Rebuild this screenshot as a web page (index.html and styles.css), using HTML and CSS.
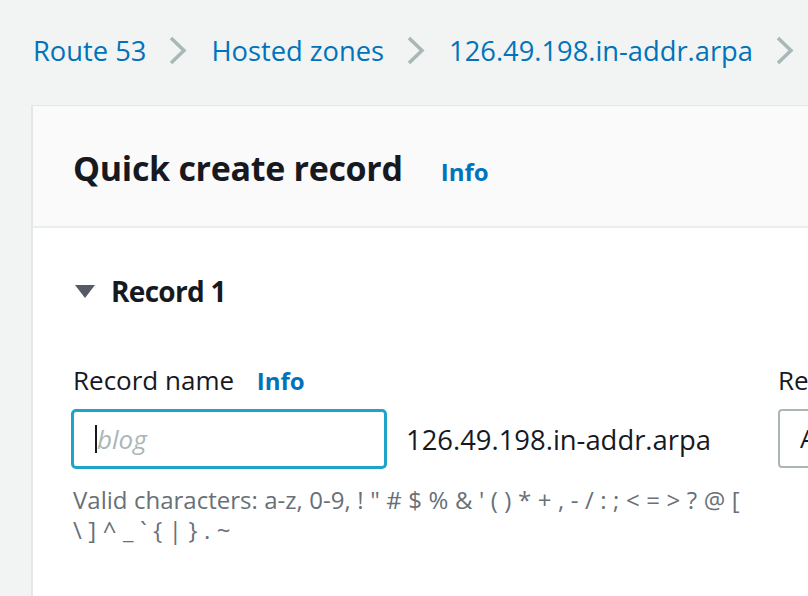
FILE: index.html
```html
<!DOCTYPE html>
<html>
	<head>
		<meta charset="utf-8">
		<meta name="viewport" content="width=device-width" />
		<title>Quick create record</title>
		<link rel="stylesheet" href="styles.css">
	</head>
	<body>
	<nav class="crumbs">
		<a href="#">Route 53</a>
		<svg class="chev" width="19" height="29" viewBox="0 0 19 29"><polyline points="3,2 16,14.5 3,27" /></svg>
		<a href="#">Hosted zones</a>
		<svg class="chev" width="19" height="29" viewBox="0 0 19 29"><polyline points="3,2 16,14.5 3,27" /></svg>
		<a href="#">126.49.198.in-addr.arpa</a>
		<svg class="chev" width="19" height="29" viewBox="0 0 19 29"><polyline points="3,2 16,14.5 3,27" /></svg>
	</nav>
	<main class="card">
		<div class="card-head">
			<h1>Quick create record</h1>
			<a class="info big" href="#">Info</a>
		</div>
		<div class="card-body">
			<div class="section">
				<svg class="caret" width="20" height="14" viewBox="0 0 20 14"><polygon points="0,0 20,0 10,13" /></svg>
				<h2>Record 1</h2>
			</div>
			<div class="fields">
				<div class="field name">
					<div class="label">Record name <a class="info" href="#">Info</a></div>
					<div class="input-row">
						<div class="input"><span class="cursor"></span><span class="ph">blog</span></div>
						<span class="suffix">126.49.198.in-addr.arpa</span>
					</div>
					<p class="help">Valid characters: a-z, 0-9, ! " # $ % &amp; ' ( ) * + , - / : ; &lt; = &gt; ? @ [ \ ] ^ _ ` { | } . ~</p>
				</div>
				<div class="field type">
					<div class="label">Record type</div>
					<div class="select">A – Routes traffic to an IPv4 address</div>
				</div>
			</div>
		</div>
	</main>
	</body>
</html>
```

FILE: styles.css
```css
html,body{
	margin:0;
	overflow:hidden;
}
body{
	width:808px;
	height:596px;
	background-color:#f2f3f3;
	font-family:"Open Sans","Liberation Sans",sans-serif;
	color:#16191f;
}
a{
	color:#0073bb;
	text-decoration:none;
}
.crumbs{
	display:flex;
	align-items:center;
	white-space:nowrap;
	height:40px;
	margin-top:30px;
	padding-left:33px;
	font-size:27.3px;
}
.chev{
	flex:none;
	margin:0 24px 0 22px;
}
.chev polyline{
	fill:none;
	stroke:#aab7b8;
	stroke-width:3.5;
}
.card{
	width:1100px;
	margin:35px 0 0 31px;
	background:#fff;
	border-left:2px solid #e4e7e7;
	border-top:1px solid #e4e7e7;
	height:500px;
}
.card-head{
	display:flex;
	align-items:center;
	height:120px;
	padding:0 40px;
	background:#fafafa;
	border-bottom:2px solid #eaeded;
}
h1{
	margin:4px 0 0 0;
	font-size:34px;
	letter-spacing:-0.3px;
	line-height:40px;
	font-weight:700;
}
.info{
	font-weight:700;
	font-size:24px;
	margin-left:16px;
}
.info.big{
	margin:10px 0 0 38px;
}
.card-body{
	padding:43px 40px 0 40px;
}
.section{
	display:flex;
	align-items:center;
	height:40px;
}
.caret{
	margin:2px 16px 0 2px;
}
.caret polygon{
	fill:#545b64;
}
h2{
	margin:0;
	font-size:28px;
	letter-spacing:-0.7px;
	font-weight:700;
}
.fields{
	display:flex;
	gap:40px;
	margin-top:51px;
	white-space:nowrap;
}
.field.name{
	width:665px;
	flex:none;
}
.label{
	font-size:26px;
	line-height:36px;
}
.input-row{
	display:flex;
	align-items:center;
	margin-top:10px;
}
.input{
	flex:none;
	display:flex;
	align-items:center;
	box-sizing:border-box;
	width:316px;
	height:60px;
	margin-left:-2px;
	padding-left:21px;
	border:3px solid #1fa3c9;
	border-radius:5px;
	background:#fff;
}
.cursor{
	width:2px;
	height:28px;
	background:#16191f;
}
.ph{
	font-style:italic;
	color:#aab7b8;
	font-size:26px;
}
.suffix{
	margin-left:19px;
	font-size:27.4px;
}
.help{
	margin:16px 0 0 0;
	white-space:normal;
	width:670px;
	font-size:24px;
	word-spacing:0.3px;
	line-height:30px;
	color:#687078;
}
.select{
	box-sizing:border-box;
	height:59px;
	margin-top:11px;
	padding-left:20px;
	border:2px solid #aab7b8;
	border-radius:4px;
	line-height:55px;
	font-size:26px;
}
```
